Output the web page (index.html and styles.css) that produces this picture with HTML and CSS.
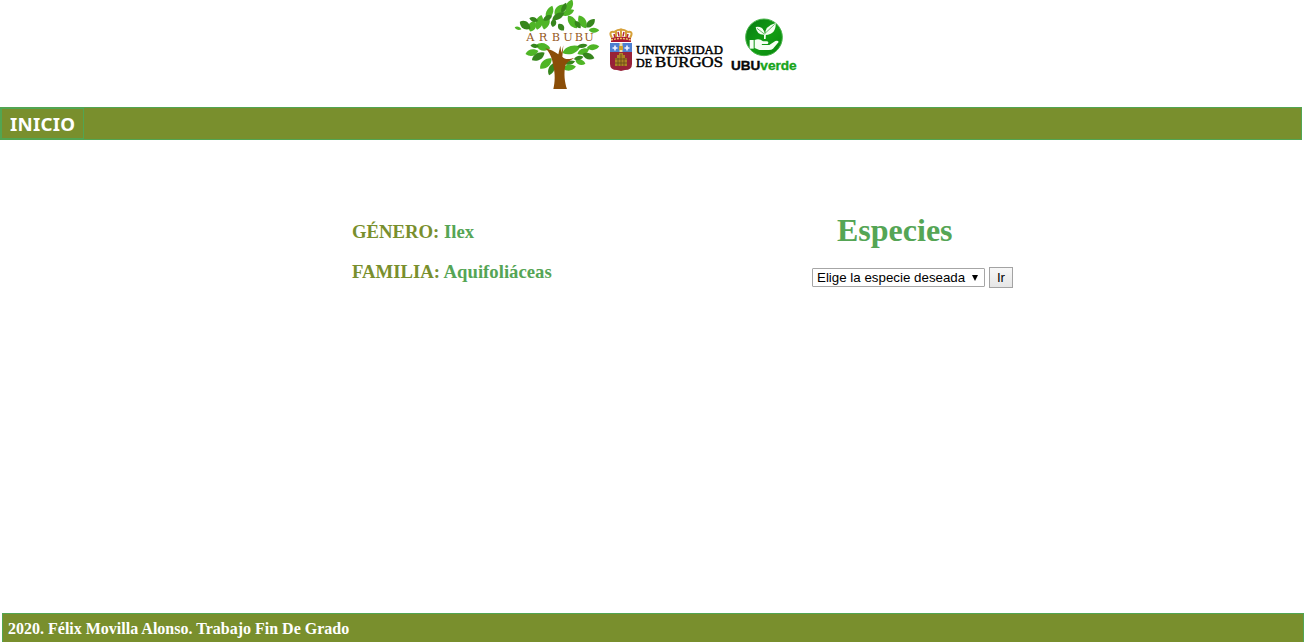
FILE: index.html
```html
<!DOCTYPE html>
<html lang="es">
<head>
<meta charset="utf-8">
<title>Arbubu</title>
<link rel="stylesheet" href="styles.css">
</head>
<body>
<header class="logos">
  <svg class="logo-tree" viewBox="0 0 285 276" role="img" aria-label="Arbubu">
    <defs><path id="leaf" d="M-21 1C-12-17 9-17 21-2C11 15-8 17-21 1Z"/></defs>
    <g fill="#4fb526">
      <use href="#leaf" transform="translate(67 79) rotate(-65) scale(.8 .9)"/>
      <use href="#leaf" transform="translate(88 67) rotate(-70) scale(1.1 .9)"/>
      <use href="#leaf" transform="translate(108 67) rotate(-72) scale(1.05 .9)"/>
      <use href="#leaf" transform="translate(119 38) rotate(-65) scale(1.05 .8)"/>
      <use href="#leaf" transform="translate(149 29) rotate(-43) scale(1 .9)"/>
      <use href="#leaf" transform="translate(178 18) rotate(-62) scale(1 .8)"/>
      <use href="#leaf" transform="translate(174 38) rotate(-20) scale(.95 .7)"/>
      <use href="#leaf" transform="translate(187 66) rotate(58) scale(1.1 .9)"/>
      <use href="#leaf" transform="translate(217 66) rotate(64) scale(1.05 .9)"/>
      <use href="#leaf" transform="translate(252 91) rotate(4) scale(.75 .6)"/>
      <use href="#leaf" transform="translate(24 85) rotate(20) scale(.5 .4)"/>
      <use href="#leaf" transform="translate(99 141) rotate(15) scale(1.05 .9)"/>
      <use href="#leaf" transform="translate(66 158) rotate(-10) scale(.95 .8)"/>
      <use href="#leaf" transform="translate(108 191) rotate(-38) scale(1.1 .9)"/>
      <use href="#leaf" transform="translate(184 150) rotate(-17) scale(1.35 .95)"/>
      <use href="#leaf" transform="translate(220 155) rotate(-20) scale(.9 .7)"/>
      <use href="#leaf" transform="translate(249 142) rotate(-5) scale(.9 .7)"/>
      <use href="#leaf" transform="translate(178 203) rotate(-5) scale(.95 .75)"/>
      <use href="#leaf" transform="translate(211 187) rotate(20) scale(.75 .65)"/>
    </g>
    <g fill="#36851c">
      <use href="#leaf" transform="translate(45 76) rotate(38) scale(.9 .9)"/>
      <use href="#leaf" transform="translate(71 59) rotate(20) scale(.65 .55)"/>
      <use href="#leaf" transform="translate(113 54) rotate(-25) scale(.7 .6)"/>
      <use href="#leaf" transform="translate(145 49) rotate(-28) scale(1 .75)"/>
      <use href="#leaf" transform="translate(131 69) rotate(-75) scale(.6 .65)"/>
      <use href="#leaf" transform="translate(153 82) rotate(55) scale(.6 .7)"/>
      <use href="#leaf" transform="translate(162 24) rotate(-65) scale(.8 .55)"/>
      <use href="#leaf" transform="translate(203 74) rotate(55) scale(.65 .6)"/>
      <use href="#leaf" transform="translate(242 70) rotate(-42) scale(.85 .75)"/>
      <use href="#leaf" transform="translate(74 138) rotate(8) scale(.6 .5)"/>
      <use href="#leaf" transform="translate(85 170) rotate(-28) scale(1.05 .85)"/>
      <use href="#leaf" transform="translate(125 207) rotate(-65) scale(.95 .7)"/>
      <use href="#leaf" transform="translate(217 138) rotate(-7) scale(.75 .5)"/>
      <use href="#leaf" transform="translate(235 169) rotate(22) scale(.9 .75)"/>
      <use href="#leaf" transform="translate(206 174) rotate(-12) scale(.7 .5)"/>
      <use href="#leaf" transform="translate(180 188) rotate(-12) scale(.75 .5)"/>
    </g>
    <path fill="#8b4e08" d="M106 145C120 148 133 154 145 163L151 137L154 158L160 136L157 170C163 179 179 179 193 173C179 183 168 187 166 198C161 220 164 247 171 267H130C135 248 136 222 130 199C127 174 119 157 106 145Z"/>
    <text class="tree-name"><tspan x="49">A</tspan><tspan x="86">R</tspan><tspan x="125">B</tspan><tspan x="160">U</tspan><tspan x="194">B</tspan><tspan x="223">U</tspan></text>
  </svg>
  <svg class="logo-university" viewBox="0 0 124 52" role="img" aria-label="Universidad de Burgos">
    <path fill="#a81632" d="M7 14Q17 11 27 14V18H7Z"/>
    <path fill="none" stroke="#d6a13a" stroke-width="2" d="M8 14Q4 7 10 8Q17 3 24 8Q30 7 26 14M17 5V13M12 7V13M22 7V13"/>
    <path fill="none" stroke="#b42a35" stroke-width="1.5" d="M10 10L11 14M14 8L15 12M20 8L19 12M24 10L23 14"/>
    <circle cx="17" cy="6" r="1.5" fill="#d6a13a"/>
    <path fill="none" stroke="#edc764" stroke-width="1.5" d="M7 16Q17 13 27 16" stroke-dasharray="2 1"/>
    <path fill="#982238" d="M6 28H28V40Q28 46 21 46L17 47L13 46Q6 46 6 40Z"/>
    <path fill="#4e7fd0" d="M6 19H28V28H6Z"/>
    <path fill="#f0dfaa" d="M15.5 19H18.5V28H15.5Z"/>
    <path stroke="#f1f4ff" stroke-width="1.6" d="M8.5 24H13.5M11 21.5V26.5M20.5 24H25.5M23 21.5V26.5"/>
    <path fill="#d2a12e" d="M15 22H19V26H15Z"/>
    <path fill="#ad8424" d="M11 42V34H13V31H15V29H19V31H21V34H23V42Z"/>
    <path stroke="#62461b" stroke-width=".8" d="M11 35H23M11 39H23M14 34V42M17 30V42M20 34V42"/>
    <text class="uni-name" x="32" y="30" textLength="87" lengthAdjust="spacingAndGlyphs">UNIVERSIDAD</text>
    <text class="uni-name" x="32" y="42.5" textLength="16" lengthAdjust="spacingAndGlyphs">DE</text>
    <text class="uni-name uni-city" x="51" y="42.5" textLength="68" lengthAdjust="spacingAndGlyphs">BURGOS</text>
  </svg>
  <svg class="logo-verde" viewBox="0 0 228 192" role="img" aria-label="UBUverde">
    <defs><linearGradient id="disc" x2="1" y2="1"><stop offset="0" stop-color="#087b13"/><stop offset=".55" stop-color="#129d13"/><stop offset="1" stop-color="#07840d"/></linearGradient></defs>
    <circle cx="114" cy="76" r="55" fill="url(#disc)" stroke="#4bb54c" stroke-width="3"/>
    <g fill="#f5fff2">
      <path d="M89 45Q113 41 117 68Q92 70 89 45Z"/>
      <path d="M149 33Q151 67 118 69Q115 42 149 33Z"/>
      <path d="M114 64H120L119 81H114Z"/>
      <path d="M71 84H83V110H71Z"/>
      <path d="M86 84Q100 78 111 88H123Q130 90 125 96H107L108 99H130L148 87Q156 84 158 90L141 110Q137 114 128 114H100L86 108Z"/>
    </g>
    <path d="M93 49L115 66L146 37" fill="none" stroke="#219b25" stroke-width="2"/>
    <text class="verde-name" x="15" y="173" textLength="88" lengthAdjust="spacingAndGlyphs">UBU</text>
    <text class="verde-name verde-green" x="103" y="173" textLength="109" lengthAdjust="spacingAndGlyphs">verde</text>
  </svg>
</header>
<nav class="menu"><a class="menu-link"><span class="menu-label">INICIO</span></a></nav>
<main class="content">
  <section class="facts">
    <p class="fact">GÉNERO: <span class="value">Ilex</span></p>
    <p class="fact">FAMILIA: <span class="value">Aquifoliáceas</span></p>
  </section>
  <section class="species">
    <h1 class="title">Especies</h1>
    <form class="picker">
      <div class="select" role="combobox"><span>Elige la especie deseada</span><svg class="arrow" viewBox="0 0 6 6"><path d="M0 0H6L3 6Z"/></svg></div>
      <button class="go" type="button">Ir</button>
    </form>
  </section>
</main>
<footer class="footer">2020. Félix Movilla Alonso. Trabajo Fin De Grado</footer>
</body>
</html>
```
FILE: styles.css
```css
* { box-sizing: border-box; }
body {
  margin: 0;
  height: 642px;
  overflow: hidden;
  display: flex;
  flex-direction: column;
  background: #fff;
  font-family: "Liberation Serif", "Times New Roman", serif;
}
.logos { display: flex; height: 107px; padding-left: 510px; flex: none; }
.logo-tree { width: 95px; height: 92px; }
.logo-university { width: 124px; height: 52px; margin: 24px 0 0 -1px; }
.logo-verde { width: 76px; height: 64px; margin: 12px 0 0 -2px; }
.tree-name { font: 34px "DejaVu Serif", serif; fill: #96591c; transform: translateY(122px); }
.uni-name { font: 12.5px "Liberation Serif", serif; fill: #000; stroke: #000; stroke-width: .45px; }
.uni-city { font-size: 15.5px; }
.verde-name { font: bold 37px "Liberation Sans", sans-serif; fill: #080808; stroke: #080808; stroke-width: 1px; }
.verde-green { fill: #18a51b; stroke: #18a51b; }
.menu {
  flex: none;
  display: flex;
  width: 1302px;
  height: 33px;
  border: 1px solid #52a552;
  background: #798f2d;
}
.menu-link {
  width: 83px;
  padding-left: 8px;
  border: 1px solid #52a552;
  color: #fff;
  font: bold 17px/31px "Noto Sans", sans-serif;
}
.menu-label {
  display: inline-block;
  letter-spacing: .2px;
  transform: scaleX(1.1);
  transform-origin: left;
}
.content { flex: 1; display: flex; padding-left: 352px; }
.facts { width: 460px; padding-top: 81px; }
.fact { margin: 0 0 18px; font-size: 18.72px; line-height: 22px; font-weight: bold; color: #798f2d; }
.value { color: #55a555; }
.species { padding-top: 71px; }
.title { margin: 0 0 18px 25px; font-size: 32px; line-height: 38px; color: #55a555; }
.picker { display: flex; align-items: center; gap: 4px; margin: 0; }
.select {
  display: flex;
  align-items: center;
  justify-content: space-between;
  width: 173px;
  height: 19px;
  padding: 0 6px 0 4px;
  border: 1px solid #a6a6a6;
  border-radius: 1px;
  font: 13.33px/17px "Liberation Sans", Arial, sans-serif;
  white-space: nowrap;
}
.arrow { width: 6px; height: 6px; }
.go {
  width: 24px;
  height: 21px;
  padding: 0;
  border: 1px solid #a3a3a3;
  background: linear-gradient(#f7f7f7, #e6e6e6);
  font: 13.33px/17px "Liberation Sans", Arial, sans-serif;
  color: #000;
}
.footer {
  flex: none;
  width: 1302px;
  height: 29px;
  margin-left: 2px;
  padding-left: 5px;
  border: 1px solid #52a552;
  border-bottom: 0;
  background: #798f2d;
  color: #fff;
  font-size: 16px;
  line-height: 29px;
  font-weight: bold;
}
```
